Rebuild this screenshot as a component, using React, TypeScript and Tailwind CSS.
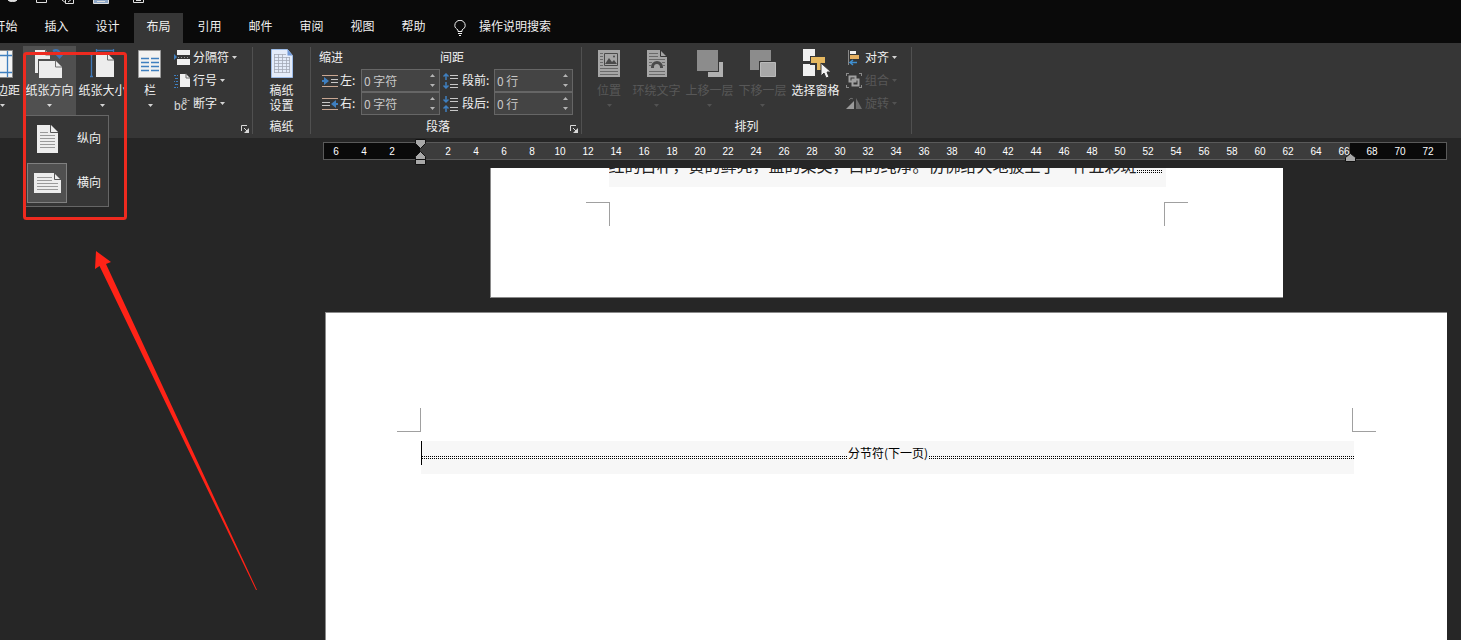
import React from "react";
import clsx from "clsx";

const tabs = ["开始", "插入", "设计", "布局", "引用", "邮件", "审阅", "视图", "帮助"];

const range = (from: number, to: number) => {
  const out: number[] = [];
  for (let n = from; n <= to; n += 2) out.push(n);
  return out;
};

const Caret = ({ className }: { className?: string }) => (
  <svg className={clsx("h-[3px] w-[5px]", className)} viewBox="0 0 5 3" fill="currentColor" opacity=".85">
    <path d="M0 0h5L2.500 3z" />
  </svg>
);

/* ---------- large icons, 32 x 32 ---------- */

const MarginsIcon = () => (
  <svg className="size-8" viewBox="0 0 32 32">
    <path d="M5.500 4.500h21v27h-21z" fill="#f4f4f4" stroke="#8a8a8a" />
    <path d="M10.500 5v26M21.500 5v26M6 9.500h20M6 26.500h20" stroke="#3f7fbf" strokeWidth="1.300" />
  </svg>
);

const OrientationIcon = () => (
  <svg className="size-8" viewBox="0 0 32 32">
    <path d="M1 4h10l5 5v4H4v14H1z" fill="#ededed" />
    <path d="M11.500 3.500V9H16" fill="none" stroke="#707070" />
    <path d="M5 15h17l6 6v11H5z" fill="#ededed" />
    <path d="M21.500 14.500V21H28" fill="none" stroke="#707070" />
    <path d="M19 5c4-2 7 0 7 4" fill="none" stroke="#3f74b4" strokeWidth="2.500" />
    <path d="M21 8h9l-4.500 5z" fill="#3f74b4" />
  </svg>
);

const SizeIcon = () => (
  <svg className="size-8" viewBox="0 0 32 32">
    <path
      d="M4.500 8v23M3 8.500h3M3 30.500h3M9 4.500h18M9.500 3v3M26.500 3v3"
      stroke="#3f78b8"
      strokeWidth="1.300"
      fill="none"
    />
    <path d="M9 8h12l6 6v17H9z" fill="#ededed" />
    <path d="M20.500 7.500V14H27" fill="none" stroke="#6a6a6a" />
  </svg>
);

const ColumnsIcon = () => (
  <svg className="size-8" viewBox="0 0 32 32">
    <path d="M4.500 4.500h22v27h-22z" fill="#f1f1f1" stroke="#9a9a9a" />
    <path
      d="M7 12.500h8M17 12.500h8M7 16.500h8M17 16.500h8M7 20.500h8M17 20.500h8M7 24.500h8M17 24.500h8"
      stroke="#3f7fbf"
      strokeWidth="1.300"
    />
  </svg>
);

const GridPaperIcon = () => (
  <svg className="size-8" viewBox="0 0 32 32">
    <path d="M5.500 3.500h16l5 6v22h-21z" fill="#e4ecfa" stroke="#9dbce8" />
    <path d="M21.500 3.500v6h5z" fill="#6f98d8" />
    <path
      d="M8 8.500h12M8 11.500h16M8 14.500h16M8 17.500h16M8 20.500h16M8 23.500h16M8 26.500h16M8.500 8v19M12.500 8v19M16.500 8v19M20.500 11v16M23.500 11v16"
      stroke="#a3aab6"
      strokeWidth=".8"
    />
  </svg>
);

const PositionIcon = () => (
  <svg className="size-8" viewBox="0 0 32 32">
    <path d="M5 4h22v27H5z" fill="#a6a6a6" />
    <path d="M11.500 7.500h13v12h-13z" fill="#a6a6a6" stroke="#4a4a4a" />
    <path d="M12 18l4-6 3 4 2-2 3 4z" fill="#4a4a4a" />
    <circle cx="21" cy="10.500" r="1" fill="#4a4a4a" />
    <path d="M7 7.500h3M7 10.500h3M7 13.500h3M7 16.500h3M7 19.500h3M7 22.500h18M7 25.500h18M7 28.500h18" stroke="#6a6a6a" />
  </svg>
);

const WrapIcon = () => (
  <svg className="size-8" viewBox="0 0 32 32">
    <path d="M6 4h13l7 7v20H6z" fill="#a6a6a6" />
    <path d="M19.500 3.500V10.500H26" fill="none" stroke="#363636" />
    <path
      d="M8 7.500h9M8 10.500h9M8 13.500h16M8 16.500h3M21 16.500h3M8 19.500h2M22 19.500h2M8 25.500h16M8 28.500h16"
      stroke="#6a6a6a"
    />
    <path d="M11.500 22v-1a4.500 4.500 0 0 1 9 0v1" fill="none" stroke="#4a4a4a" strokeWidth="3" />
  </svg>
);

const ForwardIcon = () => (
  <svg className="size-8" viewBox="0 0 32 32">
    <path d="M14 16h15v15H14z" fill="#b0b0b0" />
    <path d="M2 3h23v23H2z" fill="#363636" />
    <path d="M3 4h21v21H3z" fill="#8c8c8c" />
  </svg>
);

const BackwardIcon = () => (
  <svg className="size-8" viewBox="0 0 32 32">
    <path d="M3 4h21v20H3z" fill="#8c8c8c" />
    <path d="M12 15h18v17H12z" fill="#363636" />
    <path d="M13.500 16.500h15v14h-15z" fill="#a8a8a8" stroke="#bababa" />
  </svg>
);

const SelectionPaneIcon = () => (
  <svg className="size-8" viewBox="0 0 32 32">
    <path d="M3 3h12v12H3zM3 18h12v12H3z" fill="#f0f0f0" />
    <path d="M10 10h16v9h-4v6h-6v-6h-6z" fill="#363636" />
    <path d="M11 11h14v6h-4v7h-4v-7h-6z" fill="#e6b860" />
    <path d="M21 17v13l3-3 2 5 3-1-2-5h4z" fill="#f4f4f4" stroke="#363636" />
  </svg>
);

/* ---------- small icons, 16 x 16 ---------- */

const BreaksIcon = () => (
  <svg className="size-4" viewBox="0 0 16 16">
    <path d="M3 0h13v5H3zM3 9h13v6H3z" fill="#f0f0f0" />
    <path d="M0 4l3 3-3 3z" fill="#3f7fbf" />
    <path d="M4 7.500h1M7 7.500h1M10 7.500h1M13 7.500h1" stroke="#9a9a9a" />
  </svg>
);

const LineNumbersIcon = () => (
  <svg className="size-4" viewBox="0 0 16 16">
    <path d="M0 2.500h2M3 2.500h1M1 5.500h3M0 8.500h1M2 8.500h2M1 11.500h3M0 14.500h2M3 14.500h1" stroke="#3f7fbf" />
    <path d="M6 1h6l4 4v9H6z" fill="#f0f0f0" />
    <path d="M12 .5V5h4" fill="none" stroke="#6a6a6a" />
  </svg>
);

const HyphenIcon = () => (
  <svg className="size-4" viewBox="0 0 16 16" fill="#d8d8d8" fontFamily="Liberation Sans">
    <text x="0" y="14" fontSize="12">
      bc
    </text>
    <text x="8" y="7" fontSize="9">
      a-
    </text>
  </svg>
);

const AlignIcon = () => (
  <svg className="size-4" viewBox="0 0 16 16">
    <path d="M2.500 0v15" stroke="#8a8a8a" />
    <path d="M4 1h6v3H4z" fill="#f0f0f0" />
    <path d="M4 5h9v4H4z" fill="#e6b060" />
    <path d="M11 12.500H4M7 10l-3 2.500L7 15" stroke="#3f8fd0" strokeWidth="1.500" fill="none" />
  </svg>
);

const GroupIcon = () => (
  <svg className="size-4" viewBox="0 0 16 16">
    <path d="M0 .5h3M13 .5h3M0 14.500h3M13 14.500h3M.5 0v3M15.500 0v3M.5 12v3M15.500 12v3" stroke="#8a8a8a" />
    <path d="M3.500 3.500h6v5h-6zM6.500 6.500h6v6h-6z" fill="none" stroke="#a0a0a0" strokeWidth="2" />
  </svg>
);

const RotateIcon = () => (
  <svg className="size-4" viewBox="0 0 16 16">
    <path d="M0 13h8V5z" fill="#9a9a9a" />
    <path d="M10 2v11h6z" fill="#6c6c6c" />
    <path d="M3 4c1-2 3-2 4-1" stroke="#707070" fill="none" />
  </svg>
);

const IndentIcon = ({ right }: { right?: boolean }) => (
  <svg className="size-4" viewBox="0 0 16 16">
    <path d="M0 2.500h16M0 13.500h16" stroke="#c9a792" />
    {right ? (
      <>
        <path d="M0 6.500h8M0 9.500h8" stroke="#c8c8c8" />
        <path d="M16 8h-3" stroke="#3f7fbf" strokeWidth="2" />
        <path d="M14 4v8L9 8z" fill="#3f7fbf" />
      </>
    ) : (
      <>
        <path d="M9 6.500h7M9 9.500h7" stroke="#c8c8c8" />
        <path d="M0 8h3" stroke="#3f7fbf" strokeWidth="2" />
        <path d="M2 4v8l5-4z" fill="#3f7fbf" />
      </>
    )}
  </svg>
);

const SpacingIcon = ({ after }: { after?: boolean }) => (
  <svg className="size-4" viewBox="0 0 16 16">
    <path d="M8 2.500h8M8 5.500h8M8 11.500h8M8 14.500h8" stroke="#c8c8c8" />
    {after ? (
      <path
        d="M4 0v6M1.500 3.500L4 6l2.500-2.500M4 16v-6M1.500 12.500L4 10l2.500 2.500"
        stroke="#3f7fbf"
        strokeWidth="1.500"
        fill="none"
      />
    ) : (
      <path
        d="M4 7V1M1.500 3.500L4 1l2.500 2.500M4 9v6M1.500 12.500L4 15l2.500-2.500"
        stroke="#3f7fbf"
        strokeWidth="1.500"
        fill="none"
      />
    )}
  </svg>
);

const PortraitIcon = () => (
  <svg className="h-7 w-[21px]" viewBox="0 0 21 28">
    <path d="M0 0h14l7 7v21H0z" fill="#ededed" />
    <path d="M13.500 0v7.500H21" fill="none" stroke="#555" />
    <path d="M3 7.500h8M3 10.500h15M3 13.500h15M3 16.500h15M3 19.500h15M3 22.500h15" stroke="#9a9a9a" />
  </svg>
);

const LandscapeIcon = () => (
  <svg className="h-5 w-[27px]" viewBox="0 0 27 20">
    <path d="M0 0h20l7 7v13H0z" fill="#ededed" />
    <path d="M20.500 0v6.500H27" fill="none" stroke="#555" />
    <path d="M3 4.500h15M3 7.500h15M3 10.500h21M3 13.500h21M3 16.500h21" stroke="#9a9a9a" />
  </svg>
);

/* ---------- ribbon parts ---------- */

type BigButtonProps = {
  icon: React.ReactNode;
  label: string;
  width: string;
  active?: boolean;
  disabled?: boolean;
  caret?: boolean;
};

const BigButton = ({ icon, label, width, active, disabled, caret = true }: BigButtonProps) => (
  <button
    disabled={disabled}
    className={clsx(
      "flex h-[69px] shrink-0 flex-col items-center whitespace-nowrap",
      width,
      active && "bg-[#505050]",
      disabled && "text-[#585858]",
    )}
  >
    {icon}
    <span className="mt-1 leading-4">{label}</span>
    {caret && <Caret className="mt-1.5" />}
  </button>
);

type SmallButtonProps = { icon: React.ReactNode; label: string; disabled?: boolean };

const SmallButton = ({ icon, label, disabled }: SmallButtonProps) => (
  <button
    disabled={disabled}
    className={clsx("flex h-[23px] items-center gap-[3px] whitespace-nowrap", disabled && "text-[#585858]")}
  >
    {icon}
    <span className="pb-0.5">{label}</span>
    <Caret />
  </button>
);

const Launcher = () => (
  <button aria-label="更多" className="absolute right-[3px] bottom-[5px]">
    <svg className="size-2" viewBox="0 0 8 8">
      <path d="M.5 6V.5H6" fill="none" stroke="#d8d8d8" />
      <path d="M3 3l3 3" stroke="#d8d8d8" />
      <path d="M8 3v5H3z" fill="#d8d8d8" />
    </svg>
  </button>
);

type GroupProps = { title?: string; launcher?: boolean; className?: string; children: React.ReactNode };

const Group = ({ title, launcher, className, children }: GroupProps) => (
  <section className="relative flex shrink-0 flex-col justify-between pt-[3px] pb-1">
    <div className={clsx("flex", className)}>{children}</div>
    {title && <h2 className={clsx("text-center leading-4", launcher && "pr-4")}>{title}</h2>}
    {launcher && <Launcher />}
  </section>
);

const Divider = () => <div className="my-1 w-px shrink-0 bg-[#505050]" />;

type SpinProps = { id: string; label: string; icon: React.ReactNode; value: string; labelClass: string };

const SpinField = ({ id, label, icon, value, labelClass }: SpinProps) => (
  <div className="flex h-[23px] items-center">
    {icon}
    <label htmlFor={id} className={clsx("pb-0.5 whitespace-nowrap", labelClass)}>
      {label}
    </label>
    <div className="flex h-[23px] w-[79px] items-center border border-[#666] bg-[#444] pr-1 pl-0.5 text-[#c8c8c8]">
      <input id={id} defaultValue={value} className="w-full min-w-0 bg-transparent outline-none" />
      <div className="flex flex-col gap-[7px]">
        <button aria-label={`${label}增加`}>
          <Caret className="block rotate-180" />
        </button>
        <button aria-label={`${label}减少`}>
          <Caret className="block" />
        </button>
      </div>
    </div>
  </div>
);

const OrientationMenu = () => (
  <div className="absolute top-[115px] left-[23px] z-10 flex w-[86px] flex-col gap-1 border border-[#666] bg-[#363636] p-[3px]">
    <button className="flex items-center gap-2.5">
      <span className="flex size-10 items-center justify-center">
        <PortraitIcon />
      </span>
      <span className="pb-0.5">纵向</span>
    </button>
    <button className="flex items-center gap-2.5">
      <span className="flex size-10 items-center justify-center border border-[#808080] bg-[#505050]">
        <LandscapeIcon />
      </span>
      <span className="pb-0.5">横向</span>
    </button>
  </div>
);

const TitleBar = () => (
  <div className="h-[13px]">
    <svg className="h-2 w-40" viewBox="0 0 160 8" fill="none" stroke="#e0e0e0">
      <path d="M8 0c1 2 8 2 9 0z" fill="#e0e0e0" />
      <path d="M36.500 0v2.500h10V0" />
      <path d="M62 0l4 3M65.500 0v3.500h8V0M68 2l4-3" />
      <path d="M93.500 0v3.500h15V0" fill="#8fa8c8" />
      <path d="M97 1.500h8" />
      <path d="M133.500 0v2.500h10V0M136 .5h5" />
    </svg>
  </div>
);

const TabBar = () => (
  <nav className="flex h-[30px] items-stretch gap-0.5 whitespace-nowrap">
    <div className="-ml-[19px] flex gap-0.5">
      {tabs.map((tab) => (
        <button key={tab} className={clsx("w-[49px] shrink-0 pb-1", tab === "布局" && "bg-[#363636]")}>
          {tab}
        </button>
      ))}
    </div>
    <button className="ml-3.5 flex items-center gap-[13px]">
      <svg className="h-4 w-3" viewBox="0 0 12 16" fill="none" stroke="#f0f0f0">
        <path d="M4 11.500V10C2 8.500.8 7.500.8 5.500a5.200 5.200 0 0 1 10.400 0C11.200 7.500 10 8.500 8 10v1.500zM4 13.500h4M5 15.500h2" />
      </svg>
      <span className="pb-1">操作说明搜索</span>
    </button>
  </nav>
);

const Ribbon = () => (
  <div className="flex min-h-[95px] bg-[#363636]">
    <div className="-ml-[19px] flex">
      <Group launcher className="pr-[15px]">
        <BigButton icon={<MarginsIcon />} label="页边距" width="w-[42px]" />
        <BigButton icon={<OrientationIcon />} label="纸张方向" width="w-[53px]" active />
        <BigButton icon={<SizeIcon />} label="纸张大小" width="w-[53px]" />
        <BigButton icon={<ColumnsIcon />} label="栏" width="w-[42px]" />
        <div className="flex flex-col items-start pl-[3px]">
          <SmallButton icon={<BreaksIcon />} label="分隔符" />
          <SmallButton icon={<LineNumbersIcon />} label="行号" />
          <SmallButton icon={<HyphenIcon />} label="断字" />
        </div>
      </Group>
    </div>
    <Divider />
    <Group title="稿纸">
      <button className="flex w-[57px] flex-col items-center">
        <GridPaperIcon />
        <span className="mt-1 w-6 leading-[15px]">稿纸设置</span>
      </button>
    </Group>
    <Divider />
    <Group title="段落" launcher className="pr-2 pl-2">
      <div className="w-[121px]">
        <h3 className="pb-0.5 leading-[21px]">缩进</h3>
        <div className="pl-[3px]">
          <SpinField id="indent-left" label="左:" icon={<IndentIcon />} value="0 字符" labelClass="w-[23px] pl-0.5" />
          <SpinField
            id="indent-right"
            label="右:"
            icon={<IndentIcon right />}
            value="0 字符"
            labelClass="w-[23px] pl-0.5"
          />
        </div>
      </div>
      <div>
        <h3 className="pb-0.5 leading-[21px]">间距</h3>
        <div className="pl-0.5">
          <SpinField id="space-before" label="段前:" icon={<SpacingIcon />} value="0 行" labelClass="w-9 pl-1" />
          <SpinField id="space-after" label="段后:" icon={<SpacingIcon after />} value="0 行" labelClass="w-9 pl-1" />
        </div>
      </div>
    </Group>
    <Divider />
    <Group title="排列" className="pr-3.5 pl-1.5">
      <BigButton icon={<PositionIcon />} label="位置" width="w-[42px]" disabled />
      <BigButton icon={<WrapIcon />} label="环绕文字" width="w-[53px]" disabled />
      <BigButton icon={<ForwardIcon />} label="上移一层" width="w-[53px]" disabled />
      <BigButton icon={<BackwardIcon />} label="下移一层" width="w-[53px]" disabled />
      <BigButton icon={<SelectionPaneIcon />} label="选择窗格" width="w-[53px]" caret={false} />
      <div className="flex flex-col items-start pl-1">
        <SmallButton icon={<AlignIcon />} label="对齐" />
        <SmallButton icon={<GroupIcon />} label="组合" disabled />
        <SmallButton icon={<RotateIcon />} label="旋转" disabled />
      </div>
    </Group>
    <Divider />
  </div>
);

/* ---------- ruler ---------- */

const Ticks = ({ values }: { values: number[] }) => (
  <>
    {values.map((n) => (
      <span key={n} className="w-7 shrink-0 text-center">
        {n}
      </span>
    ))}
  </>
);

const Ruler = () => (
  <div className="mt-1 mr-3.5 ml-[323px] flex h-[18px] border border-[#5a5a5a] font-['Liberation_Sans',sans-serif] text-[10px] leading-[18px] text-white">
    <div className="flex w-24 shrink-0 justify-end bg-[#0a0a0a] pr-3.5">
      <Ticks values={[6, 4, 2]} />
    </div>
    <div className="relative flex min-w-0 flex-1 bg-[#3c3c3c] pl-3.5">
      <Ticks values={range(2, 66)} />
      <svg className="absolute -top-1 -left-[5px] h-[27px] w-[11px]" viewBox="0 0 11 27" fill="#a8a8a8" stroke="#111">
        <path d="M.5.5h10v4l-5 5-5-5zM5.500 12.500l5 5v3H.5v-3zM.5 20.500h10v5H.5z" />
      </svg>
      <svg
        className="absolute top-2.5 -right-1.5 z-10 h-[9px] w-[11px]"
        viewBox="0 0 11 9"
        fill="#a8a8a8"
        stroke="#111"
      >
        <path d="M5.500.5l5 4v4H.5v-4z" />
      </svg>
    </div>
    <div className="flex w-24 shrink-0 bg-[#0a0a0a] pl-2">
      <Ticks values={[68, 70, 72]} />
    </div>
  </div>
);

/* ---------- document ---------- */

const Dots = ({ className }: { className?: string }) => (
  <div className={clsx("flex flex-col gap-px", className)}>
    <div className="h-px bg-[repeating-linear-gradient(90deg,#000_0_1px,transparent_1px_2px)]" />
    <div className="h-px bg-[repeating-linear-gradient(90deg,#000_0_1px,transparent_1px_2px)]" />
  </div>
);

const Document = () => (
  <main className="mt-2 flex min-h-0 flex-1 flex-col items-center gap-3.5 overflow-hidden pr-3.5 pl-[325px] text-black">
    <article className="h-[130px] w-[793px] shrink-0 border-b border-l border-[#8a8a8a] bg-white">
      <div className="mr-[117px] ml-[118px] flex h-[19px] items-end overflow-hidden bg-[#f7f7f7] pb-3.5">
        <p className="text-[16px] leading-4 whitespace-nowrap text-[#222]">
          红的古朴，黄的鲜亮，蓝的柔美，白的纯净。仿佛给大地披上了一件五彩斑
        </p>
        <Dots className="w-[26px]" />
      </div>
      <div className="mx-[95px] mt-[15px] flex justify-between">
        <div className="size-6 border-t border-r border-[#a0a0a0]" />
        <div className="size-6 border-t border-l border-[#a0a0a0]" />
      </div>
    </article>
    <article className="w-full flex-1 border-t border-l border-[#8a8a8a] bg-white">
      <div className="mx-[71px] mt-[95px] flex justify-between">
        <div className="size-6 border-r border-b border-[#a0a0a0]" />
        <div className="size-6 border-b border-l border-[#a0a0a0]" />
      </div>
      <div className="mt-[9px] mr-[93px] ml-[95px] h-[33px] bg-[#f7f7f7]">
        <div className="flex h-6 items-center border-l border-black">
          <Dots className="mt-2 flex-1" />
          <span className="px-px">分节符(下一页)</span>
          <Dots className="mt-2 flex-1" />
        </div>
      </div>
    </article>
  </main>
);

const Annotation = () => (
  <svg className="pointer-events-none absolute top-0 left-0 z-20 h-[600px] w-[270px]" viewBox="0 0 270 600">
    <rect x="24.500" y="53.500" width="101" height="165" rx="2" fill="none" stroke="#ee2a1f" strokeWidth="3" />
    <path d="M96 251l15 11-5 2 151 326h-1L99.500 266 95 269z" fill="#ff2317" />
  </svg>
);

export default function App() {
  return (
    <div className="relative flex h-screen flex-col overflow-hidden bg-[#262626] font-['Noto_Sans_CJK_SC',sans-serif] text-xs text-[#f0f0f0]">
      <header className="bg-[#0a0a0a]">
        <TitleBar />
        <TabBar />
      </header>
      <Ribbon />
      <OrientationMenu />
      <Ruler />
      <Document />
      <Annotation />
    </div>
  );
}
